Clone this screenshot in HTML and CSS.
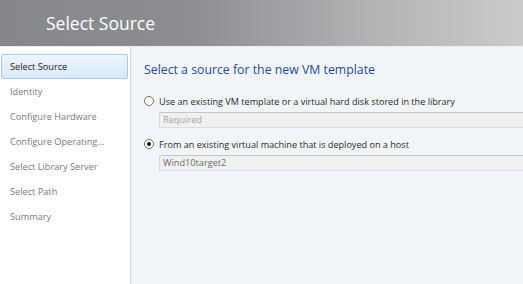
FILE: index.html
```html
<!DOCTYPE html>
<html lang="en">
<head>
  <meta charset="UTF-8">
  <title>Select Source</title>
  <link rel="stylesheet" href="styles.css">
</head>
<body>
  <header class="page-header">
    <h1>Select Source</h1>
  </header>

  <div class="wizard">
    <nav class="steps">
      <div class="step active">Select Source</div>
      <div class="step">Identity</div>
      <div class="step">Configure Hardware</div>
      <div class="step">Configure Operating...</div>
      <div class="step">Select Library Server</div>
      <div class="step">Select Path</div>
      <div class="step">Summary</div>
    </nav>

    <main class="content">
      <h2>Select a source for the new VM template</h2>

      <div class="option">
        <label class="radio-row">
          <span class="radio"></span>
          Use an existing VM template or a virtual hard disk stored in the library
        </label>
        <div class="field placeholder">Required</div>
      </div>

      <div class="option">
        <label class="radio-row">
          <span class="radio checked"></span>
          From an existing virtual machine that is deployed on a host
        </label>
        <div class="field">Wind10target2</div>
      </div>
    </main>
  </div>
</body>
</html>
```

FILE: styles.css
```css
* {
  margin: 0;
  padding: 0;
  box-sizing: border-box;
}

body {
  font-family: "Open Sans", "Noto Sans", sans-serif;
  width: 523px;
  height: 284px;
  overflow: hidden;
  background: #f1f5f9;
  color: #333;
}

.page-header {
  height: 47px;
  padding-left: 46px;
  display: flex;
  align-items: center;
  background: linear-gradient(to right, #85878b 0%, #8b8d90 35%, #b3b4b6 72%, #cacbcd 100%);
  border-bottom: 1px solid #eceeef;
}

.page-header h1 {
  font-size: 17.5px;
  font-weight: 400;
  color: #fff;
}

.wizard {
  display: flex;
  height: 237px;
}

.steps {
  width: 131px;
  flex-shrink: 0;
  background: #fff;
  border-right: 1px solid #d6dbe1;
  box-shadow: 1px 0 0 #e7ebef;
  padding: 7px 2px 0 1px;
}

.step {
  height: 25px;
  line-height: 23px;
  padding-left: 8px;
  font-size: 9.2px;
  color: #7b7b7b;
  border: 1px solid transparent;
}

.step.active {
  color: #1b1b1b;
  border-color: #a9c9ec;
  border-radius: 2px;
  background: linear-gradient(to bottom, #eef5fd, #d9e8f9);
}

.content {
  flex: 1;
  padding: 15px 0 0 13px;
  overflow: hidden;
}

.content h2 {
  font-size: 12.3px;
  line-height: 16px;
  font-weight: 400;
  color: #284b9b;
  margin-bottom: 15px;
}

.option {
  margin-bottom: 8px;
}

.radio-row {
  display: flex;
  align-items: center;
  gap: 5px;
  font-size: 9.1px;
  color: #2b2b2b;
  height: 16px;
  margin-bottom: 3px;
}

.radio {
  width: 10px;
  height: 10px;
  flex-shrink: 0;
  border: 1px solid #707070;
  border-radius: 50%;
  background: #fff;
  display: flex;
  align-items: center;
  justify-content: center;
}

.radio.checked::after {
  content: "";
  width: 4px;
  height: 4px;
  border-radius: 50%;
  background: #1a1a1a;
}

.field {
  margin-left: 15px;
  width: 420px;
  height: 16px;
  line-height: 14px;
  padding-left: 3px;
  font-size: 9.2px;
  color: #6c6c6c;
  background: #f0f0f0;
  border-top: 1px solid #c6c6c8;
  border-bottom: 1px solid #dcdde2;
  border-left: 1px solid #d8d8d8;
}

.field.placeholder {
  color: #a3a3a3;
}
```
